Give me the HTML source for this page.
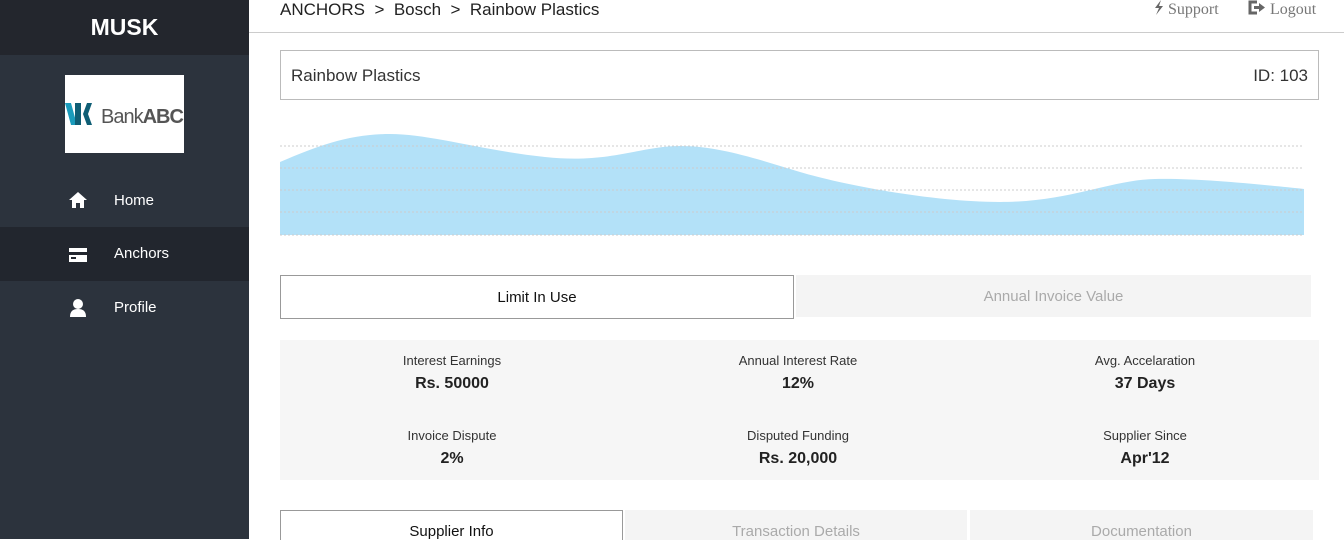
<!DOCTYPE html>
<html><head><style>
*{margin:0;padding:0;box-sizing:border-box}
body{width:1344px;height:539px;overflow:hidden;background:#fff;font-family:"Liberation Sans",sans-serif;position:relative}
.sb{position:absolute;left:0;top:0;width:249px;height:539px;background:#2c333d}
.brand{height:55px;background:#23262d;color:#fff;font-weight:bold;font-size:23px;text-align:center;line-height:55px}
.logo{position:absolute;left:65px;top:75px;width:119px;height:78px;background:#fff;overflow:hidden}
.nav{position:absolute;left:0;width:249px;height:54px;color:#fff;font-size:15px;line-height:54px;padding-left:114px}
.nav svg{position:absolute;left:69px;top:18px}
.crumb{position:absolute;left:280px;top:0;font-size:17px;color:#222}
.top{position:absolute;top:0;font-family:"Liberation Serif",serif;font-size:16px;color:#777}
.top svg{vertical-align:-1px;margin-right:4px}
.hr{position:absolute;left:249px;right:0;top:32px;border-top:1px solid #ccc}
.box{position:absolute;border:1px solid #bbb}
.stats{position:absolute;left:280px;top:340px;width:1039px;height:140px;background:#f6f6f6}
.st{position:absolute;width:300px;text-align:center;color:#333}
.st .l{font-size:13px}.st .v{font-size:16px;font-weight:bold;margin-top:7px;color:#222}
.tab{position:absolute;top:510px;height:30px;background:#f4f4f4;color:#aaa;font-size:15px;text-align:center;line-height:44px}
</style></head><body>
<div class="sb">
<div class="brand">MUSK</div>
<div class="logo"><svg width="119" height="78"><path d="M0 28h6l6 22h-6z" fill="#1a9bbb"/><path d="M10 28h6v22h-6z" fill="#0f5e75"/><path d="M22 28h5l-4 11 4 11h-5l-4-11z" fill="#0f5e75"/><text x="36" y="48" font-family="Liberation Sans" font-size="20" fill="#555" letter-spacing="-1">Bank<tspan font-weight="bold">ABC</tspan></text></svg></div>
<div class="nav" style="top:174px"><svg width="18" height="16"><path d="M9 0L0 8h3v8h4v-5h4v5h4V8h3z" fill="#fff"/></svg>Home</div>
<div class="nav" style="top:227px;background:#22262e"><svg width="18" height="14" style="top:21px"><rect x="0" y="0" width="18" height="14" fill="#fff"/><rect x="0" y="4" width="18" height="3" fill="#22262e"/><rect x="2" y="9" width="5" height="2" fill="#22262e"/></svg>Anchors</div>
<div class="nav" style="top:281px"><svg width="18" height="18"><circle cx="9" cy="5" r="5" fill="#fff"/><path d="M1 18c0-6 3-8 8-8s8 2 8 8z" fill="#fff"/></svg>Profile</div>
</div>
<div class="crumb">ANCHORS &nbsp;&gt;&nbsp; Bosch &nbsp;&gt;&nbsp; Rainbow Plastics</div>
<div class="top" style="left:1154px"><svg width="10" height="15"><path d="M7 0L1 8h4l-3 7 7-9H5z" fill="#666"/></svg>Support</div>
<div class="top" style="left:1248px"><svg width="18" height="15"><path d="M9 2H2v11h7" stroke="#666" stroke-width="3" fill="none"/><path d="M6 6h5V3l6 4.5-6 4.5V9H6z" fill="#666"/></svg>Logout</div>
<div class="hr"></div>
<div class="box" style="left:280px;top:50px;width:1039px;height:50px;font-size:17px;color:#333;line-height:50px;padding:0 10px">Rainbow Plastics<span style="float:right">ID: 103</span></div>
<svg style="position:absolute;left:280px;top:120px" width="1025" height="120">
<path d="M0 42C40 25 70 14 110 14S200 30 265 37 360 26 400 26 480 40 520 52 650 82 720 82 830 60 875 59 985 65 1024 69V115H0z" fill="#b3e1f8"/>
<g stroke="#ccc" stroke-dasharray="2 2"><line x1="0" y1="26" x2="1024" y2="26"/><line x1="0" y1="48" x2="1024" y2="48"/><line x1="0" y1="70" x2="1024" y2="70"/><line x1="0" y1="92" x2="1024" y2="92"/><line x1="0" y1="115" x2="1024" y2="115"/></g>
</svg>
<div class="box" style="left:280px;top:275px;width:514px;height:44px;border-color:#999;text-align:center;line-height:44px;font-size:15px;color:#111">Limit In Use</div>
<div style="position:absolute;left:796px;top:275px;width:515px;height:42px;background:#f4f4f4;text-align:center;line-height:44px;font-size:15px;color:#aaa">Annual Invoice Value</div>
<div class="stats">
<div class="st" style="left:22px;top:13px"><div class="l">Interest Earnings</div><div class="v">Rs. 50000</div></div>
<div class="st" style="left:368px;top:13px"><div class="l">Annual Interest Rate</div><div class="v">12%</div></div>
<div class="st" style="left:715px;top:13px"><div class="l">Avg. Accelaration</div><div class="v">37 Days</div></div>
<div class="st" style="left:22px;top:88px"><div class="l">Invoice Dispute</div><div class="v">2%</div></div>
<div class="st" style="left:368px;top:88px"><div class="l">Disputed Funding</div><div class="v">Rs. 20,000</div></div>
<div class="st" style="left:715px;top:88px"><div class="l">Supplier Since</div><div class="v">Apr'12</div></div>
</div>
<div class="tab" style="left:280px;width:343px;background:#fff;border:1px solid #999;border-bottom:none;color:#111;line-height:42px">Supplier Info</div>
<div class="tab" style="left:625px;width:342px">Transaction Details</div>
<div class="tab" style="left:970px;width:343px">Documentation</div>
</body></html>
